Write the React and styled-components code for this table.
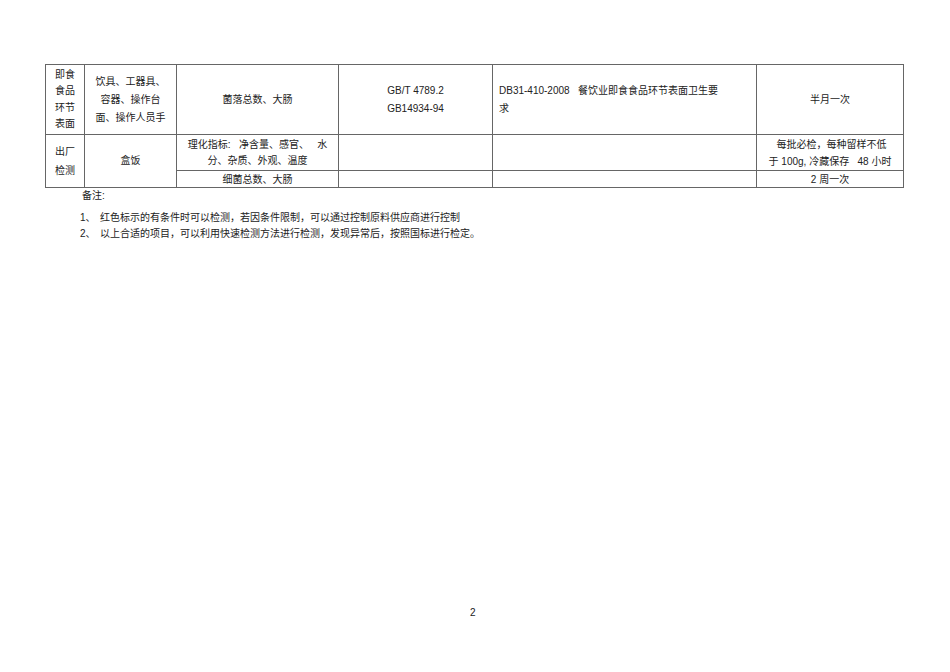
import React from "react";
import styled, { createGlobalStyle } from "styled-components";

const Global = createGlobalStyle`
  html, body { margin: 0; padding: 0; background: #fff; }
  body { font-family: "Liberation Sans", "Noto Sans CJK SC", sans-serif; color: #222; }
`;

const Page = styled.div`
  width: 950px;
  height: 672px;
  position: relative;
  box-sizing: border-box;
  padding: 64px 0 0 45px;
`;

const Table = styled.table`
  border-collapse: collapse;
  table-layout: fixed;
  width: 858px;
  font-size: 10px;
`;

const Row = styled.tr`
  height: ${(p) => p.$h}px;
`;

const Cell = styled.td`
  border: 1px solid #666;
  padding: 0 ${(p) => (p.$pad != null ? p.$pad : 4)}px;
  text-align: ${(p) => p.$align || "center"};
  vertical-align: middle;
  line-height: ${(p) => p.$lh || 18}px;
  white-space: ${(p) => (p.$pre ? "pre" : "normal")};
  overflow: hidden;
`;

const Notes = styled.div`
  margin: 0 0 0 37px;
  font-size: 10px;
  line-height: 16.5px;
`;

const NoteTitle = styled.div`
  margin-bottom: 5px;
`;

const NoteLine = styled.div`
  display: flex;
`;

const NoteNum = styled.span`
  width: 20px;
  margin-left: -2px;
`;

const PageNum = styled.div`
  position: absolute;
  left: 470px;
  top: 607px;
  font-size: 10px;
`;

export default function App() {
  return (
    <Page>
      <Global />
      <Table>
        <colgroup>
          <col style={{ width: 39 }} />
          <col style={{ width: 92 }} />
          <col style={{ width: 162 }} />
          <col style={{ width: 154 }} />
          <col style={{ width: 264 }} />
          <col style={{ width: 147 }} />
        </colgroup>
        <tbody>
          <Row $h={70}>
            <Cell $lh={16.5} $pad={2}>
              即食<br />食品<br />环节<br />表面
            </Cell>
            <Cell $pad={0}>
              饮具、工器具、<br />容器、操作台<br />面、操作人员手
            </Cell>
            <Cell>菌落总数、大肠</Cell>
            <Cell>
              GB/T 4789.2<br />GB14934-94
            </Cell>
            <Cell $align="left" $pad={6}>
              DB31-410-2008&nbsp;&nbsp; 餐饮业即食食品环节表面卫生要<br />求
            </Cell>
            <Cell>半月一次</Cell>
          </Row>
          <Row $h={36}>
            <Cell rowSpan={2} $lh={19} $pad={2}>
              出厂<br />检测
            </Cell>
            <Cell rowSpan={2}>盒饭</Cell>
            <Cell $lh={16} $pre>
              {"理化指标:   净含量、感官、   水\n分、杂质、外观、温度"}
            </Cell>
            <Cell $lh={16} />
            <Cell $lh={16} />
            <Cell $lh={17} $pre $pad={2}>
              {" 每批必检，每种留样不低\n于 100g, 冷藏保存   48 小时"}
            </Cell>
          </Row>
          <Row $h={17}>
            <Cell $lh={15}>细菌总数、大肠</Cell>
            <Cell $lh={15} />
            <Cell $lh={15} />
            <Cell $lh={15}>2 周一次</Cell>
          </Row>
        </tbody>
      </Table>
      <Notes>
        <NoteTitle>备注:</NoteTitle>
        <NoteLine>
          <NoteNum>1、</NoteNum>
          <span>红色标示的有条件时可以检测，若因条件限制，可以通过控制原料供应商进行控制</span>
        </NoteLine>
        <NoteLine>
          <NoteNum>2、</NoteNum>
          <span>以上合适的项目，可以利用快速检测方法进行检测，发现异常后，按照国标进行检定。</span>
        </NoteLine>
      </Notes>
      <PageNum>2</PageNum>
    </Page>
  );
}
